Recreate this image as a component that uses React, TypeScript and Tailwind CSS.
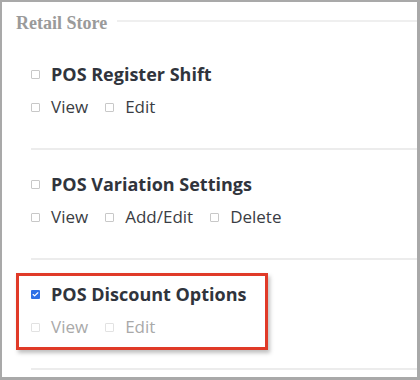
import { Check } from "lucide-react";

type Perm = { label: string; checked?: boolean };

const Box = ({ checked, muted }: { checked?: boolean; muted?: boolean }) =>
  checked ? (
    <span className="flex h-[9px] w-[9px] shrink-0 items-center justify-center rounded-[1px] bg-[#2d6fe6]">
      <Check className="h-[7px] w-[7px] text-white" strokeWidth={4} />
    </span>
  ) : (
    <span
      className={`h-[9px] w-[9px] shrink-0 rounded-[1px] border ${
        muted ? "border-[#e2e2e2]" : "border-[#c8c8c8]"
      } bg-white`}
    />
  );

const Section = ({
  title,
  perms,
  checked,
  muted,
}: {
  title: string;
  perms: Perm[];
  checked?: boolean;
  muted?: boolean;
}) => (
  <div className="flex h-[110px] flex-col border-b-2 border-[#ececec] pt-[22px]">
    <div className="flex h-6 items-center gap-[11px]">
      <Box checked={checked} />
      <span className="text-[18px] font-bold text-[#30343c]">{title}</span>
    </div>
    <div className="mt-[9px] flex h-6 items-center gap-[17px]">
      {perms.map((p) => (
        <div key={p.label} className="flex items-center gap-[11px]">
          <Box muted={muted} />
          <span
            className={`text-[17px] ${muted ? "text-[#a9a9a9]" : "text-[#3a3d44]"}`}
          >
            {p.label}
          </span>
        </div>
      ))}
    </div>
  </div>
);

export default function App() {
  return (
    <main className="relative h-[380px] w-[420px] overflow-hidden border-t-2 border-l-2 border-r-[3px] border-b-[3px] border-[#a9a9a9] bg-white font-['Open_Sans',sans-serif]">
      <div className="flex items-center gap-[10px] pl-[14px] pt-[9px]">
        <h2 className="font-['Liberation_Serif',serif] text-[18px] font-bold leading-6 text-[#9a9a9a]">
          Retail Store
        </h2>
        <div className="mt-[-4px] h-[2px] flex-1 bg-[#efefef]" />
      </div>
      <div className="ml-[29px] mt-[5px]">
        <Section
          title="POS Register Shift"
          perms={[{ label: "View" }, { label: "Edit" }]}
        />
        <Section
          title="POS Variation Settings"
          perms={[{ label: "View" }, { label: "Add/Edit" }, { label: "Delete" }]}
        />
        <Section
          title="POS Discount Options"
          checked
          muted
          perms={[{ label: "View" }, { label: "Edit" }]}
        />
      </div>
      <div className="pointer-events-none absolute left-[14px] top-[271px] h-[77px] w-[252px] border-[3px] border-[#e03a28] shadow-[2px_3px_4px_rgba(0,0,0,0.25)]" />
    </main>
  );
}
